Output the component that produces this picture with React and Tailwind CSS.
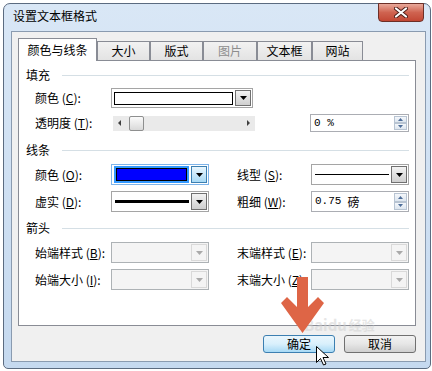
import React from "react";

const cjk = "font-['Noto_Sans_CJK_SC','Noto_Sans',sans-serif]";
const mono = "font-['Liberation_Mono','Noto_Sans_CJK_SC',monospace]";

// small down triangle used by every combo button
function Down({ color = "#000" }) {
  return (
    <svg width="7" height="4" viewBox="0 0 7 4">
      <path d="M0 0h7L3.5 4z" fill={color} />
    </svg>
  );
}

function DropBtn({ variant }) {
  const look =
    variant === "focus"
      ? "border-[#3c7fb1] bg-linear-to-b from-[#eaf6fd] to-[#a7d9f5]"
      : variant === "disabled"
        ? "border-[#d9d9d9] bg-[#f4f4f4]"
        : "border-[#707070] bg-linear-to-b from-[#f3f3f3] to-[#cfcfcf]";
  return (
    <div className={`w-[16px] shrink-0 flex items-center justify-center border ${look}`}>
      <Down color={variant === "disabled" ? "#a9a9a9" : "#000"} />
    </div>
  );
}

function Combo({ width = "w-[98px]", variant = "normal", children }) {
  const look =
    variant === "focus"
      ? "border-[#7eb4ea] bg-white"
      : variant === "disabled"
        ? "border-[#adb2b5] bg-[#f4f4f4]"
        : "border-[#a5a5a5] bg-white";
  return (
    <div className={`${width} h-full flex border p-px shrink-0 ${look}`}>
      <div className="flex-1 flex items-center pl-px pr-[2px]">{children}</div>
      <DropBtn variant={variant} />
    </div>
  );
}

function SpinArrow({ up }) {
  return (
    <div className="flex-1 flex items-center justify-center border border-[#b8c4d2] bg-linear-to-b from-[#f4f7fb] to-[#dde6ef]">
      <svg width="5" height="3" viewBox="0 0 5 3">
        <path d={up ? "M0 3h5L2.5 0z" : "M0 0h5L2.5 3z"} fill="#4d6d99" />
      </svg>
    </div>
  );
}

function Spin({ children, width = "w-[98px]" }) {
  return (
    <div className={`${width} h-full flex border border-[#abadb3] bg-white shrink-0 p-px`}>
      <div className={`flex-1 flex items-center pl-[2px] text-[11px] ${mono}`}>{children}</div>
      <div className="w-[13px] flex flex-col">
        <SpinArrow up />
        <SpinArrow />
      </div>
    </div>
  );
}

function Label({ text, k, width = "w-[76px]" }) {
  return (
    <div className={`${width} shrink-0 text-[12px] leading-none whitespace-nowrap`}>
      {text} (<span className="underline">{k}</span>):
    </div>
  );
}

function Section({ title, className = "" }) {
  return (
    <div className={`flex items-center h-[14px] pl-[7px] pr-[6px] ${className}`}>
      <span className="text-[12px] leading-none">{title}</span>
      <div className="flex-1 h-px bg-[#d5dfe5] ml-[12px]" />
    </div>
  );
}

function Tab({ label, width, active, disabled }) {
  if (active) {
    return (
      <div
        className={`${width} h-[23px] -mb-px z-10 flex items-center justify-center border border-b-0 border-[#898c95] bg-white text-[12px]`}
      >
        {label}
      </div>
    );
  }
  return (
    <div
      className={`${width} h-[19px] flex items-center justify-center border border-b-0 border-[#898c95] bg-linear-to-b from-[#f2f2f2] to-[#e3e3e3] text-[12px] ${disabled ? "text-[#8d8d8d]" : ""}`}
    >
      {label}
    </div>
  );
}

export default function App() {
  return (
    <div className={`relative w-[432px] h-[371px] bg-white pt-[3px] pl-[3px] ${cjk} text-black`}>
      {/* window frame */}
      <div className="w-[428px] h-[366px] flex flex-col rounded-t-[7px] rounded-b-[5px] border border-[#5b6b80] bg-linear-to-b from-[#d9e7f6] to-[#c5d9ef] pl-[7px] pr-[4px] pb-[6px]">
        {/* title bar */}
        <div className="h-[27px] flex items-start justify-between">
          <div className="pl-[2px] pt-[6px] text-[12px] leading-none">设置文本框格式</div>
          <div className="w-[46px] h-[19px] -mt-px mr-[2px] flex items-center justify-center rounded-b-[4px] border border-[#6d2f27] bg-linear-to-b from-[#e9a99b] via-[#cf6350] to-[#c24734]">
            <svg width="14" height="11" viewBox="0 0 14 11">
              <path
                d="M2 1.5 L12 9.5 M12 1.5 L2 9.5"
                stroke="#4b1d18"
                strokeWidth="4"
                strokeLinecap="round"
              />
              <path
                d="M2 1.5 L12 9.5 M12 1.5 L2 9.5"
                stroke="#fff"
                strokeWidth="2.2"
                strokeLinecap="round"
              />
            </svg>
          </div>
        </div>

        {/* client area */}
        <div className="flex-1 flex flex-col border border-[#8a9bb0] bg-[#f0f0f0] pt-[6px] pl-[6px] pr-[9px]">
          {/* tabs */}
          <div className="flex items-end h-[22px]">
            <Tab label="颜色与线条" width="w-[79px]" active />
            <Tab label="大小" width="w-[53px]" />
            <Tab label="版式" width="w-[53px]" />
            <Tab label="图片" width="w-[54px]" disabled />
            <Tab label="文本框" width="w-[55px]" />
            <Tab label="网站" width="w-[51px]" />
          </div>

          {/* tab panel */}
          <div className="h-[266px] border border-[#898c95] bg-white pt-[7px] flex flex-col">
            <Section title="填充" />
            <div className="flex items-center h-[20px] mt-[6px] pl-[16px]">
              <Label text="颜色" k="C" />
              <Combo width="w-[142px]">
                <div className="flex-1 h-[13px] border border-black bg-white" />
              </Combo>
            </div>
            <div className="flex items-center h-[18px] mt-[6px] pl-[16px]">
              <Label text="透明度" k="T" />
              <div className="ml-[2px] w-[142px] h-[15px] bg-[#eaeaea] flex items-center">
                <svg className="ml-[5px]" width="3" height="6" viewBox="0 0 3 6">
                  <path d="M3 0v6L0 3z" fill="#404040" />
                </svg>
                <div className="ml-[8px] w-[15px] h-[15px] rounded-[2px] border border-[#8e8f8f] bg-linear-to-b from-[#fbfbfb] to-[#d9d9d9]" />
                <div className="flex-1" />
                <svg className="mr-[5px]" width="3" height="6" viewBox="0 0 3 6">
                  <path d="M0 0v6l3-3z" fill="#404040" />
                </svg>
              </div>
              <div className="flex-1" />
              <div className="h-full mr-[6px]">
                <Spin width="w-[99px]">0 %</Spin>
              </div>
            </div>

            <Section title="线条" className="mt-[11px]" />
            <div className="flex items-center h-[21px] mt-[7px] pl-[16px]">
              <Label text="颜色" k="O" />
              <Combo variant="focus">
                <div className="flex-1 h-full bg-[#3399ff] p-[2px]">
                  <div className="h-full border border-black bg-[#0000ff]" />
                </div>
              </Combo>
              <div className="w-[28px]" />
              <Label text="线型" k="S" width="w-[74px]" />
              <Combo>
                <div className="flex-1 h-px bg-black ml-px" />
              </Combo>
            </div>
            <div className="flex items-center h-[21px] mt-[6px] pl-[16px]">
              <Label text="虚实" k="D" />
              <Combo>
                <div className="flex-1 h-[3px] bg-black ml-px" />
              </Combo>
              <div className="w-[28px]" />
              <Label text="粗细" k="W" width="w-[74px]" />
              <Spin>
                <span>0.75</span>
                <span className={`ml-[6px] text-[12px] ${cjk}`}>磅</span>
              </Spin>
            </div>

            <Section title="箭头" className="mt-[9px]" />
            <div className="flex items-center h-[21px] mt-[7px] pl-[16px]">
              <Label text="始端样式" k="B" />
              <Combo variant="disabled" />
              <div className="w-[28px]" />
              <Label text="末端样式" k="E" width="w-[74px]" />
              <Combo variant="disabled" />
            </div>
            <div className="flex items-center h-[21px] mt-[6px] pl-[16px]">
              <Label text="始端大小" k="I" />
              <Combo variant="disabled" />
              <div className="w-[28px]" />
              <Label text="末端大小" k="Z" width="w-[74px]" />
              <Combo variant="disabled" />
            </div>
          </div>

          {/* buttons */}
          <div className="flex justify-end gap-[9px] mt-[9px]">
            <button className="w-[72px] h-[18px] flex items-center justify-center rounded-[3px] border border-[#3c7fb1] bg-linear-to-b from-[#eaf6fd] via-[#d9f0fc] to-[#a7d9f5] text-[12px] leading-none">
              确定
            </button>
            <button className="w-[72px] h-[18px] flex items-center justify-center rounded-[3px] border border-[#707070] bg-linear-to-b from-[#f2f2f2] via-[#e6e6e6] to-[#cfcfcf] text-[12px] leading-none">
              取消
            </button>
          </div>
        </div>
      </div>

      {/* faint baidu watermark */}
      <div className="absolute left-[304px] top-[317px] flex items-center gap-[2px] text-[15px] font-bold leading-none text-[#cfcfcf] opacity-50 pointer-events-none">
        <span>Baidu</span>
        <span className="text-[13px]">经验</span>
      </div>

      {/* orange arrow + mouse cursor */}
      <svg className="absolute left-0 top-0 pointer-events-none" width="432" height="371" viewBox="0 0 432 371">
        <path
          d="M297 277 H308 V307 L318 297 L324 303 L302.5 333 L281 303 L287 297 L297 307 Z"
          fill="#de6546"
        />
        <path
          d="M316.5 346.5 V362.5 L320.5 358.5 L323.5 365 L326 364 L323 357.5 H328.5 Z"
          fill="#fff"
          stroke="#000"
          strokeWidth="1"
          strokeLinejoin="round"
        />
      </svg>
    </div>
  );
}
